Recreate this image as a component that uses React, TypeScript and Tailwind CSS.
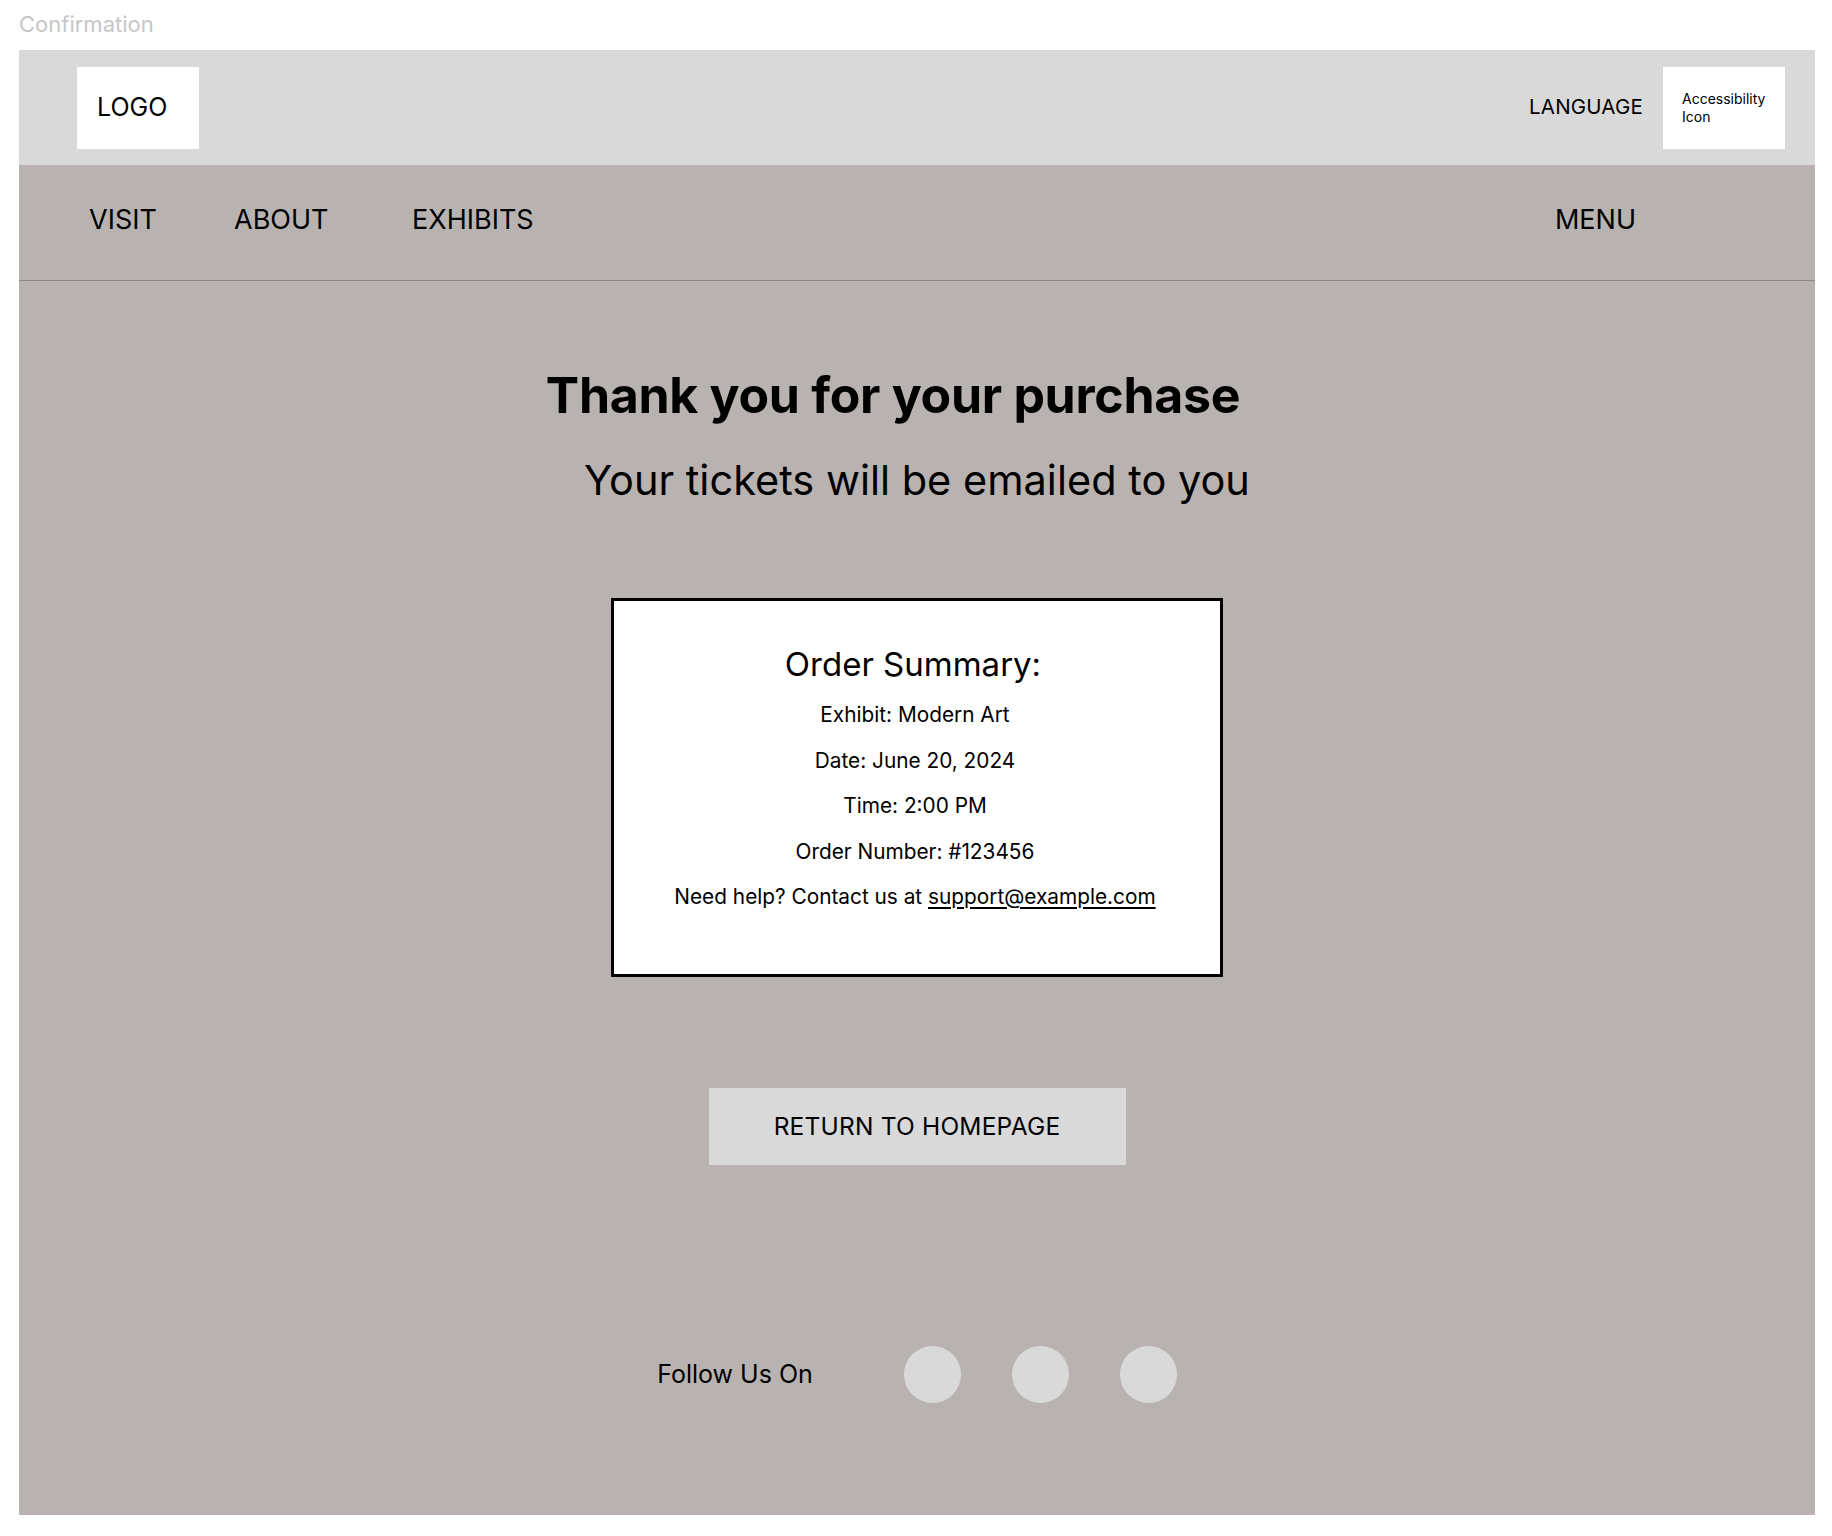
import React from 'react';

const ORDER_LINES = [
  'Exhibit: Modern Art',
  'Date: June 20, 2024',
  'Time: 2:00 PM',
  'Order Number: #123456',
];

export default function App() {
  return (
    <div className="w-[1832px] h-[1536px] bg-white font-['Inter','Liberation_Sans',sans-serif] text-black">
      {/* Frame label */}
      <div className="h-[50px] pl-[19px] pt-[9px] text-[22px] leading-[30px] text-[#c6c6c6]">Confirmation</div>

      <div className="ml-[19px] w-[1796px] h-[1465px] flex flex-col bg-[#b8b3b0]">
        {/* Top header */}
        <header className="h-[115px] shrink-0 bg-[#d9d9d9] flex items-center pl-[58px] pr-[30px]">
          <div className="w-[122px] h-[82px] bg-white flex items-center pl-[20px] text-[25px]">LOGO</div>
          <div className="ml-auto flex items-center gap-[20px]">
            <span className="text-[20.5px] tracking-[0.2px]">LANGUAGE</span>
            <div className="w-[122px] h-[82px] bg-white flex flex-col justify-center pl-[19px] text-[14px] leading-[18px]">
              <span>Accessibility</span>
              <span>Icon</span>
            </div>
          </div>
        </header>

        {/* Nav bar */}
        <nav className="h-[116px] shrink-0 flex items-center pl-[70px] pr-[179px] pb-[5px] border-b border-[#8c8785] text-[27px]">
          <span className="w-[145px]">VISIT</span>
          <span className="w-[178px]">ABOUT</span>
          <span>EXHIBITS</span>
          <span className="ml-auto">MENU</span>
        </nav>

        {/* Main content */}
        <main className="flex-1 flex flex-col items-center">
          <h1 className="mt-[85px] pr-[48px] text-[50px] leading-[58px] font-bold tracking-[-0.3px]">
            Thank you for your purchase
          </h1>
          <p className="mt-[31px] text-[41.5px] leading-[50px]">Your tickets will be emailed to you</p>

          <section className="mt-[93px] w-[612px] h-[379px] bg-white border-[3px] border-black flex flex-col items-center pt-[43px]">
            <h2 className="pr-[8px] text-[33px] leading-[40px]">Order Summary:</h2>
            <div className="mt-[8px] pr-[4px] flex flex-col items-center text-[20.8px] leading-[45.5px]">
              {ORDER_LINES.map((line) => (
                <span key={line}>{line}</span>
              ))}
              <span>
                Need help? Contact us at <a className="underline underline-offset-[3px]">support@example.com</a>
              </span>
            </div>
          </section>

          <button className="mt-[111px] w-[417px] h-[77px] bg-[#d9d9d9] text-[24.5px] tracking-[0.2px]">
            RETURN TO HOMEPAGE
          </button>

          <footer className="mt-[181px] flex items-center">
            <span className="text-[25px]">Follow Us On</span>
            <div className="ml-[91px] flex items-center gap-[51px]">
              <div className="w-[57px] h-[57px] rounded-full bg-[#d9d9d9]"></div>
              <div className="w-[57px] h-[57px] rounded-full bg-[#d9d9d9]"></div>
              <div className="w-[57px] h-[57px] rounded-full bg-[#d9d9d9]"></div>
            </div>
          </footer>
        </main>
      </div>
    </div>
  );
}
